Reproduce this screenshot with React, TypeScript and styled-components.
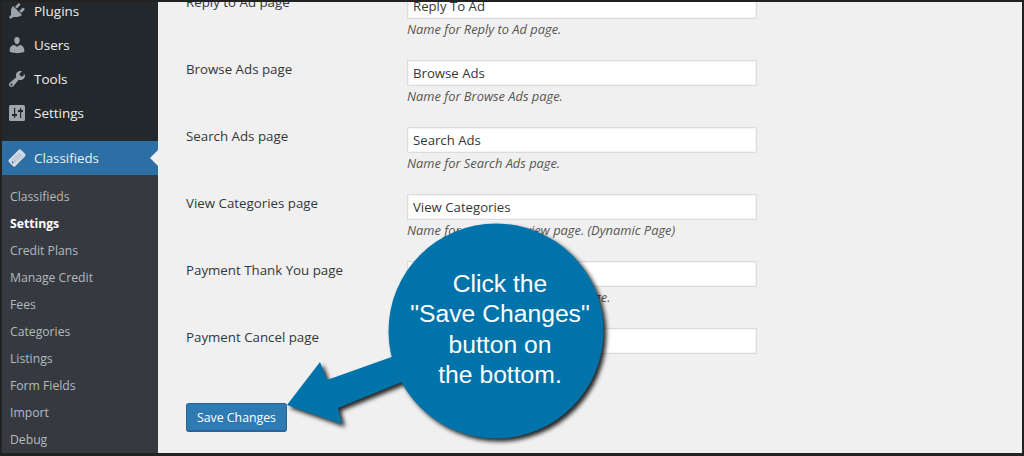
import styled, { createGlobalStyle } from "styled-components";

const GlobalStyle = createGlobalStyle`
  html, body {
    margin: 0;
    padding: 0;
    background: #f1f1f1;
  }
  * {
    box-sizing: border-box;
  }
`;

const Frame = styled.div`
  position: relative;
  display: flex;
  width: 1024px;
  height: 456px;
  overflow: hidden;
  border: solid #222;
  border-width: 2px 2px 3px 2px;
  font-family: "Open Sans", "Liberation Sans", sans-serif;
  font-size: 13.3px;
  background: #f0f0f0;
`;

const Sidebar = styled.nav`
  flex: 0 0 156px;
  display: flex;
  flex-direction: column;
  background: #23282d;
`;

const TopMenu = styled.div`
  margin-top: -8px;
  padding-bottom: 11px;
`;

const MenuItem = styled.div<{ $active?: boolean }>`
  position: relative;
  display: flex;
  align-items: center;
  height: 34px;
  padding-left: 5px;
  gap: 7px;
  font-size: ${(p) => (p.$active ? "13.3px" : "13.5px")};
  color: #eee;
  background: ${(p) => (p.$active ? "#2d6fa5" : "transparent")};

  svg {
    flex: none;
    width: 20px;
    height: 20px;
    fill: ${(p) => (p.$active ? "#d5dbe1" : "#a0a5aa")};
  }
`;

const ActiveNotch = styled.span`
  position: absolute;
  right: 0;
  top: 9px;
  border: 8px solid transparent;
  border-left-width: 0;
  border-right-color: #f1f1f1;
`;

const SubMenu = styled.div`
  flex: 1;
  padding-top: 8px;
  background: #363a40;
`;

const SubItem = styled.div<{ $current?: boolean }>`
  height: 27px;
  line-height: 27px;
  padding-left: 8px;
  font-size: 12.2px;
  font-weight: ${(p) => (p.$current ? 700 : 400)};
  color: ${(p) => (p.$current ? "#fff" : "#b4b9be")};
`;

const Main = styled.main`
  flex: 1;
  padding-left: 28px;
`;

const Rows = styled.div`
  margin-top: -9px;
`;

const Row = styled.div`
  display: grid;
  grid-template-columns: 221px 350px;
  height: 67px;
`;

const Label = styled.label`
  line-height: 18px;
  color: #32373c;
`;

const TextInput = styled.input`
  display: block;
  width: 350px;
  height: 26px;
  padding: 0 5px;
  border: 1px solid #dcdcdc;
  box-shadow: inset 0 0 0 1px #f4f4f4;
  outline: none;
  background: #fff;
  font: inherit;
  font-size: 13.2px;
  color: #32373c;
`;

const Hint = styled.p`
  margin: 1px 0 0;
  line-height: 18px;
  font-size: 12.85px;
  font-style: italic;
  color: #555;
`;

const SaveButton = styled.button`
  display: block;
  width: 101px;
  height: 29px;
  margin-top: 8px;
  padding: 0;
  border: 1px solid #2a6496;
  border-bottom-width: 2px;
  border-radius: 3px;
  background: #2e7bb3;
  font: inherit;
  font-size: 12.3px;
  color: #fff;
`;

const CalloutShape = styled.svg`
  position: absolute;
  left: -2px;
  top: -2px;
  width: 1024px;
  height: 456px;
  filter: drop-shadow(3px 3px 2px rgba(0, 0, 0, 0.85));
  pointer-events: none;
`;

const CalloutText = styled.div`
  position: absolute;
  left: 398px;
  top: 267px;
  width: 200px;
  font-family: "Liberation Sans", Arial, sans-serif;
  font-size: 24.7px;
  line-height: 30.3px;
  text-align: center;
  color: #fff;
`;

const PluginsIcon = () => (
  <svg viewBox="0 0 20 20">
    <path d="M13.11 4.36L9.87 7.6 8 5.73l3.24-3.24c.35-.34 1.05-.2 1.56.32.52.51.66 1.21.31 1.55zm-8 1.77l.91-1.12 9.01 9.01-1.19.84c-.71.71-2.63 1.16-3.82 1.16H6.14L4.9 17.26c-.59.59-1.54.59-2.12 0-.59-.58-.59-1.53 0-2.12l1.24-1.24v-3.88c0-1.13.4-3.19 1.09-3.89zm7.26 3.97l3.24-3.24c.34-.35 1.04-.21 1.55.31.52.51.66 1.21.31 1.55l-3.24 3.25z" />
  </svg>
);

const UsersIcon = () => (
  <svg viewBox="0 0 20 20">
    <path d="M10 9.25c-2.27 0-2.73-3.44-2.73-3.44C7 4.02 7.82 2 9.97 2c2.16 0 2.98 2.02 2.71 3.81 0 0-.41 3.44-2.68 3.44zm0 2.57L12.72 10c2.39 0 4.52 2.33 4.52 4.53v2.49s-3.65 1.13-7.24 1.13c-3.65 0-7.24-1.13-7.24-1.13v-2.49c0-2.25 1.94-4.48 4.47-4.48z" />
  </svg>
);

const ToolsIcon = () => (
  <svg viewBox="0 0 20 20">
    <path d="M16.68 9.77c-1.34 1.34-3.3 1.67-4.95.99l-5.41 6.52c-.99.99-2.59.99-3.58 0s-.99-2.59 0-3.57l6.52-5.42c-.68-1.65-.35-3.61.99-4.95 1.28-1.28 3.12-1.62 4.72-1.06l-2.89 2.89 2.82 2.82 2.86-2.87c.53 1.58.18 3.39-1.08 4.65zM3.81 16.21c.4.39 1.04.39 1.43 0 .4-.4.4-1.04 0-1.43-.39-.4-1.03-.4-1.43 0-.39.39-.39 1.03 0 1.43z" />
  </svg>
);

const SettingsIcon = () => (
  <svg viewBox="0 0 20 20">
    <rect x="2" y="2" width="16" height="16" rx="1.5" />
    <path d="M7 5h1.2v6H10v2H8.2v2H7v-2H5v-2h2zM13 5h1.2v2H16v2h-1.8v6H13V9h-2V7h2z" fill="#23282d" />
  </svg>
);

const TagIcon = () => (
  <svg viewBox="0 0 20 20">
    <g transform="rotate(-45 10 10)">
      <rect x="1.5" y="5.5" width="17" height="9" rx="1.5" />
      <circle cx="4" cy="10" r="0.9" fill="#2d6fa5" />
      <path d="M6.5 7.5v5M8.5 7.5v5M10.5 7.5v5M12.5 7.5v5M14.5 7.5v5" stroke="#7f9fbd" strokeWidth="0.7" />
    </g>
  </svg>
);

const subItems = [
  "Classifieds",
  "Settings",
  "Credit Plans",
  "Manage Credit",
  "Fees",
  "Categories",
  "Listings",
  "Form Fields",
  "Import",
  "Debug",
];

const pages = [
  { label: "Reply to Ad page", value: "Reply To Ad", hint: "Name for Reply to Ad page." },
  { label: "Browse Ads page", value: "Browse Ads", hint: "Name for Browse Ads page." },
  { label: "Search Ads page", value: "Search Ads", hint: "Name for Search Ads page." },
  {
    label: "View Categories page",
    value: "View Categories",
    hint: "Name for categories view page. (Dynamic Page)",
  },
  {
    label: "Payment Thank You page",
    value: "Payment Thank You",
    hint: "Name for Payment Thank You page.",
  },
  { label: "Payment Cancel page", value: "Payment Cancel" },
];

export default function App() {
  return (
    <>
      <GlobalStyle />
      <Frame>
        <Sidebar>
          <TopMenu>
            <MenuItem>
              <PluginsIcon />
              Plugins
            </MenuItem>
            <MenuItem>
              <UsersIcon />
              Users
            </MenuItem>
            <MenuItem>
              <ToolsIcon />
              Tools
            </MenuItem>
            <MenuItem>
              <SettingsIcon />
              Settings
            </MenuItem>
          </TopMenu>
          <MenuItem $active>
            <TagIcon />
            Classifieds
            <ActiveNotch />
          </MenuItem>
          <SubMenu>
            {subItems.map((item) => (
              <SubItem key={item} $current={item === "Settings"}>
                {item}
              </SubItem>
            ))}
          </SubMenu>
        </Sidebar>
        <Main>
          <Rows>
            {pages.map((page) => (
              <Row key={page.label}>
                <Label>{page.label}</Label>
                <div>
                  <TextInput value={page.value} readOnly />
                  {page.hint && <Hint>{page.hint}</Hint>}
                </div>
              </Row>
            ))}
          </Rows>
          <SaveButton>Save Changes</SaveButton>
        </Main>
        <CalloutShape viewBox="0 0 1024 456">
          <path d="M287 405 L320 362 L327 380 L400 354 L402 382 L338 408 L342 424 Z" fill="#0073aa" />
          <circle cx="496" cy="331" r="107.5" fill="#0073aa" />
        </CalloutShape>
        <CalloutText>
          Click the
          <br />
          "Save Changes"
          <br />
          button on
          <br />
          the bottom.
        </CalloutText>
      </Frame>
    </>
  );
}
